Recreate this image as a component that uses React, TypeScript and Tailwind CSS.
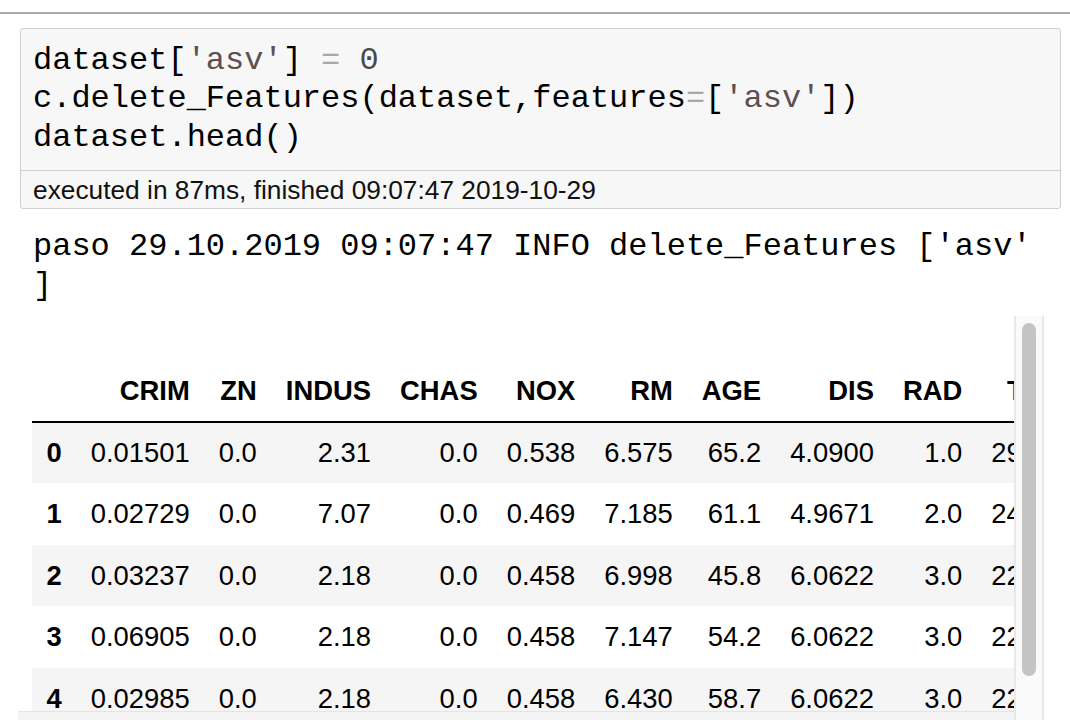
import React from "react";

const cols = ["CRIM", "ZN", "INDUS", "CHAS", "NOX", "RM", "AGE", "DIS", "RAD", "TAX", "PTRATIO", "B", "LSTAT"];
const rows: string[][] = [
  ["0.01501", "0.0", "2.31", "0.0", "0.538", "6.575", "65.2", "4.0900", "1.0", "296.0", "15.3", "396.90", "4.98"],
  ["0.02729", "0.0", "7.07", "0.0", "0.469", "7.185", "61.1", "4.9671", "2.0", "242.0", "17.8", "392.83", "4.03"],
  ["0.03237", "0.0", "2.18", "0.0", "0.458", "6.998", "45.8", "6.0622", "3.0", "222.0", "18.7", "394.63", "2.94"],
  ["0.06905", "0.0", "2.18", "0.0", "0.458", "7.147", "54.2", "6.0622", "3.0", "222.0", "18.7", "396.90", "5.33"],
  ["0.02985", "0.0", "2.18", "0.0", "0.458", "6.430", "58.7", "6.0622", "3.0", "222.0", "18.7", "394.12", "5.21"],
];

export default function App() {
  const mono = { fontFamily: '"Liberation Mono", "Courier New", monospace' };
  const sans = { fontFamily: '"Liberation Sans", Arial, Helvetica, sans-serif' };
  return (
    <div className="w-[1070px] h-[720px] overflow-hidden bg-white text-black" style={sans}>
      <div className="pt-[12px]">
        <div className="h-[2px] bg-[#ababab]" />
      </div>

      <div className="ml-[20px] mr-[9px] mt-[14px] border border-[#cfcfcf] rounded-[3px] bg-[#f7f7f7]">
        <div className="px-[12px] py-[13px] text-[32px] leading-[38.4px] whitespace-pre text-black" style={mono}>
          <div>
            dataset[<span className="text-[#5e5050]">'asv'</span>] <span className="text-[#a8a8a8]">=</span>{" "}
            <span className="text-[#4a4a4a]">0</span>
          </div>
          <div>
            c.delete_Features(dataset,features<span className="text-[#a8a8a8]">=</span>[
            <span className="text-[#5e5050]">'asv'</span>])
          </div>
          <div>dataset.head()</div>
        </div>
        <div className="border-t border-[#cfcfcf] h-[38px] leading-[38px] px-[12px] text-[26.3px] text-[#111]">
          executed in 87ms, finished 09:07:47 2019-10-29
        </div>
      </div>

      <div className="mt-[19px] ml-[33px] text-[32px] leading-[38.4px] whitespace-pre" style={mono}>
        <div>paso 29.10.2019 09:07:47 INFO delete_Features ['asv'</div>
        <div>]</div>
      </div>

      <div className="mt-[11px] ml-[18px] w-[1026px] h-[420px] flex">
        <div className="w-[996px] flex flex-col">
          <div className="h-[395px] overflow-hidden">
            <table className="mt-[45.5px] ml-[14px] border-collapse text-[27.4px] leading-none whitespace-nowrap">
              <thead>
                <tr className="h-[60px]">
                  <th className="px-[14.5px] border-b-2 border-black" />
                  {cols.map((c) => (
                    <th key={c} className="px-[14.5px] text-right font-bold border-b-2 border-black">
                      {c}
                    </th>
                  ))}
                </tr>
              </thead>
              <tbody>
                {rows.map((r, i) => (
                  <tr key={i} className={i % 2 === 0 ? "h-[61.6px] bg-[#f5f5f5]" : "h-[61.6px] bg-white"}>
                    <th className="px-[14.5px] text-right font-bold">{i}</th>
                    {r.map((v, j) => (
                      <td key={j} className="px-[14.5px] text-right">
                        {v}
                      </td>
                    ))}
                  </tr>
                ))}
              </tbody>
            </table>
          </div>
          <div className="h-[20px] bg-[#f3f3f3] border-t border-[#e4e4e4]" />
        </div>
        <div className="w-[30px] border-x-2 border-[#e8e8e8] bg-[#fafafa] pt-[7px] px-[6px]">
          <div className="h-[353px] w-[14px] rounded-full bg-[#c4c4c4]" />
        </div>
      </div>
    </div>
  );
}
